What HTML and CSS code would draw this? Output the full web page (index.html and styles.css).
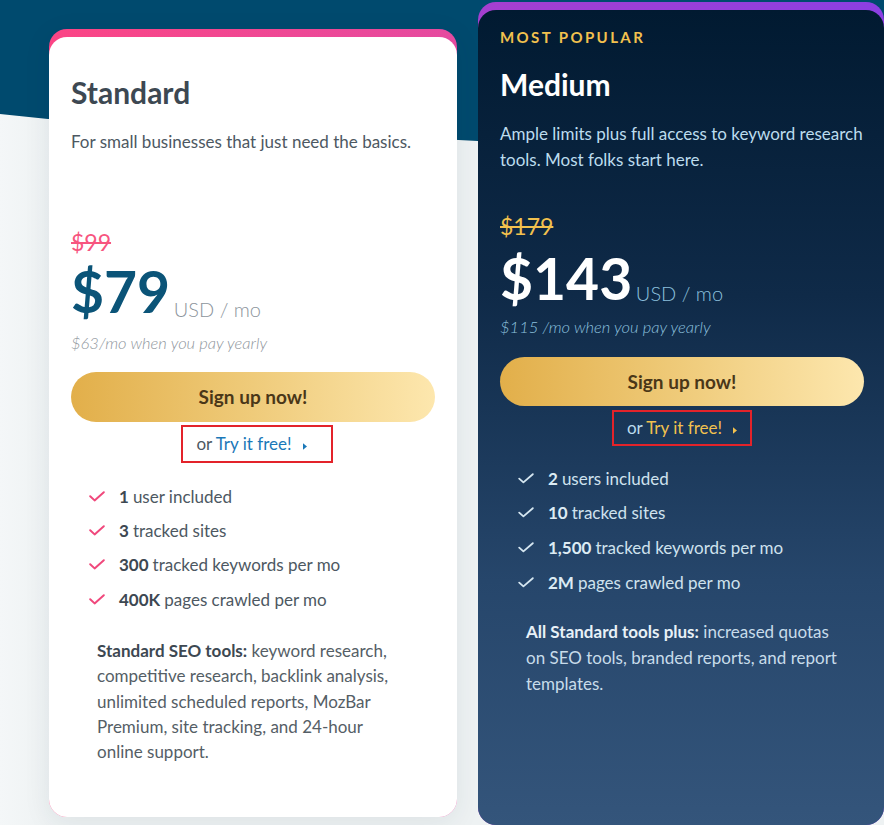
FILE: index.html
```html
<!DOCTYPE html>
<html lang="en">
<head>
<meta charset="utf-8">
<title>Pricing</title>
<link rel="stylesheet" href="styles.css">
</head>
<body>
<div class="stage">
  <div class="card card--standard">
    <div class="card__body">
      <h2 class="plan-name">Standard</h2>
      <p class="plan-desc">For small businesses that just need the basics.</p>
      <div class="old-price">$99</div>
      <div class="price"><span class="price__amount">$79</span> <span class="price__unit">USD / mo</span></div>
      <div class="yearly">$63/mo when you pay yearly</div>
      <a class="btn" href="#">Sign up now!</a>
      <div class="trial-row">
        <span class="trial">or <span class="trial__link">Try it free!</span><svg class="trial__arrow" viewBox="0 0 5 8" width="5" height="8"><path d="M0 0 L5 4 L0 8 Z"/></svg></span>
      </div>
      <ul class="features">
        <li><svg class="check" viewBox="0 0 16 11" width="16" height="11"><path d="M1.2 5.2 L5.6 9.4 L14.8 1.2"/></svg><b>1</b> user included</li>
        <li><svg class="check" viewBox="0 0 16 11" width="16" height="11"><path d="M1.2 5.2 L5.6 9.4 L14.8 1.2"/></svg><b>3</b> tracked sites</li>
        <li><svg class="check" viewBox="0 0 16 11" width="16" height="11"><path d="M1.2 5.2 L5.6 9.4 L14.8 1.2"/></svg><b>300</b> tracked keywords per mo</li>
        <li><svg class="check" viewBox="0 0 16 11" width="16" height="11"><path d="M1.2 5.2 L5.6 9.4 L14.8 1.2"/></svg><b>400K</b> pages crawled per mo</li>
      </ul>
      <p class="tools"><strong>Standard SEO tools:</strong> keyword research, competitive research, backlink analysis, unlimited scheduled reports, MozBar Premium, site tracking, and 24-hour online support.</p>
    </div>
  </div>

  <div class="card card--medium">
    <div class="card__body">
      <div class="badge">MOST POPULAR</div>
      <h2 class="plan-name">Medium</h2>
      <p class="plan-desc">Ample limits plus full access to keyword research tools. Most folks start here.</p>
      <div class="old-price">$179</div>
      <div class="price"><span class="price__amount">$143</span> <span class="price__unit">USD / mo</span></div>
      <div class="yearly">$115 /mo when you pay yearly</div>
      <a class="btn" href="#">Sign up now!</a>
      <div class="trial-row">
        <span class="trial">or <span class="trial__link">Try it free!</span><svg class="trial__arrow" viewBox="0 0 5 8" width="5" height="8"><path d="M0 0 L5 4 L0 8 Z"/></svg></span>
      </div>
      <ul class="features">
        <li><svg class="check" viewBox="0 0 16 11" width="16" height="11"><path d="M1.2 5.6 L5.4 9.4 L14.8 1.2"/></svg><b>2</b> users included</li>
        <li><svg class="check" viewBox="0 0 16 11" width="16" height="11"><path d="M1.2 5.6 L5.4 9.4 L14.8 1.2"/></svg><b>10</b> tracked sites</li>
        <li><svg class="check" viewBox="0 0 16 11" width="16" height="11"><path d="M1.2 5.6 L5.4 9.4 L14.8 1.2"/></svg><b>1,500</b> tracked keywords per mo</li>
        <li><svg class="check" viewBox="0 0 16 11" width="16" height="11"><path d="M1.2 5.6 L5.4 9.4 L14.8 1.2"/></svg><b>2M</b> pages crawled per mo</li>
      </ul>
      <p class="tools"><strong>All Standard tools plus:</strong> increased quotas on SEO tools, branded reports, and report templates.</p>
    </div>
  </div>
</div>
</body>
</html>
```

FILE: styles.css
```css
* {
  box-sizing: border-box;
}

html, body {
  margin: 0;
  padding: 0;
}

body {
  font-family: Lato, "Open Sans", "Liberation Sans", sans-serif;
  background: #eef2f3;
  overflow: hidden;
}

.stage {
  position: relative;
  display: flex;
  align-items: flex-start;
  gap: 21px;
  padding-left: 49px;
  width: 884px;
  height: 825px;
  overflow: hidden;
  background: linear-gradient(90deg, #f4f7f8 0%, #eef2f3 6%, #eef2f3 100%);
}

/* decorative blue band behind the cards */
.stage::before {
  content: "";
  position: absolute;
  left: 0;
  top: 0;
  width: 884px;
  height: 200px;
  background: #004a6e;
  clip-path: polygon(0 0, 884px 0, 884px 165px, 478px 141px, 48px 119px, 0 114px);
  z-index: 0;
}

.card {
  position: relative;
  z-index: 1;
  border-radius: 18px;
  padding-top: 8px;
  display: flex;
  flex-direction: column;
}

.card__body {
  flex: 1;
  border-radius: 18px;
}

.card--standard {
  margin-top: 29px;
  width: 408px;
  height: 788px;
  background: linear-gradient(90deg, #fb4585 0%, #e54aa0 100%);
  box-shadow: 0 6px 28px rgba(20, 50, 70, 0.08);
}

.card--standard .card__body {
  background: #ffffff;
  padding: 37px 22px 0 22px;
}

.card--medium {
  margin-top: 2px;
  width: 406px;
  height: 823px;
  background: linear-gradient(90deg, #a53fd0 0%, #8c3fe2 100%);
}

.card--medium .card__body {
  background: linear-gradient(180deg, #011a31 0%, #0f2a48 35%, #26466b 70%, #34557b 100%);
  padding: 17px 17px 0 22px;
}

/* badge */
.badge {
  font-size: 15px;
  line-height: 20px;
  font-weight: 700;
  letter-spacing: 2.4px;
  color: #f2c14e;
  margin-bottom: 19px;
}

/* titles */
.plan-name {
  margin: 0;
  font-size: 30px;
  line-height: 36px;
  font-weight: 700;
}

.card--standard .plan-name { color: #3d4852; }
.card--medium .plan-name { color: #ffffff; }

.plan-desc {
  margin: 19px 0 0 0;
  font-size: 17px;
  line-height: 26px;
  min-height: 52px;
}

.card--standard .plan-desc { color: #4d5862; }
.card--medium .plan-desc { color: #bcdcee; }

/* prices */
.old-price {
  font-size: 23px;
  line-height: 28px;
  text-decoration: line-through;
  text-decoration-thickness: 1.5px;
}

.card--standard .old-price { color: #f7557f; margin-top: 47px; }
.card--medium .old-price { color: #f2c14e; margin-top: 39px; }

.price {
  font-size: 57px;
  line-height: 57px;
  white-space: nowrap;
}

.price__amount {
  font-weight: 700;
}

.price__unit {
  font-size: 20px;
  line-height: 20px;
  font-weight: 300;
  margin-left: -11px;
}

.card--standard .price { margin-top: 7px; }
.card--standard .price__amount { color: #0b5478; }
.card--standard .price__unit { color: #8c949c; vertical-align: -4px; }

.card--medium .price { margin-top: 10px; }
.card--medium .price__amount { color: #ffffff; }
.card--medium .price__unit { color: #8cc0de; vertical-align: -1px; }

.yearly {
  font-size: 16.5px;
  line-height: 24px;
  font-style: italic;
  font-weight: 300;
}

.card--standard .yearly { color: #8f969d; margin-top: 11px; }
.card--medium .yearly { color: #8cc0de; margin-top: 8px; }

/* button */
.btn {
  display: block;
  height: 50px;
  border-radius: 25px;
  background: linear-gradient(90deg, #e2af4a 0%, #efcb7a 50%, #fde7ae 100%);
  color: #4a3718;
  font-size: 19px;
  line-height: 50px;
  font-weight: 700;
  text-align: center;
  text-decoration: none;
}

.card--standard .btn { margin-top: 17px; }
.card--medium .btn { margin: 18px 3px 0 0; height: 49px; line-height: 49px; }

/* try it free */
.trial-row {
  text-align: center;
}

.trial {
  display: inline-block;
  border: 2px solid #e3232a;
  font-size: 17px;
  line-height: 24px;
  white-space: nowrap;
}

.trial__arrow {
  display: inline-block;
  width: 4px;
  height: 7px;
  margin-left: 11px;
  vertical-align: 0px;
}

.card--standard .trial-row { margin-top: 3px; }
.card--standard .trial {
  padding: 5px 24px 5px 13px;
  margin-left: 8px;
  color: #4d5862;
}
.card--standard .trial__link { color: #1a78b8; }
.card--standard .trial__arrow { fill: #1a78b8; }

.card--medium .trial-row { margin: 4px 3px 0 0; }
.card--medium .trial {
  padding: 4px 13px;
  color: #bcdcee;
}
.card--medium .trial__link { color: #f2c14e; }
.card--medium .trial__arrow { fill: #f2c14e; }

/* features */
.features {
  list-style: none;
  margin: 0;
  padding: 0 0 0 18px;
  font-size: 17px;
}

.features li {
  display: flex;
  align-items: center;
  white-space: nowrap;
}

.features b {
  font-weight: 700;
  margin-right: 4px;
}

.check {
  flex: none;
  width: 16px;
  height: 11px;
  margin-right: 14px;
  fill: none;
  stroke-width: 2;
  stroke-linecap: round;
  stroke-linejoin: round;
}

.card--standard .features { margin-top: 16px; color: #4d5862; }
.card--standard .features li { height: 34.3px; }
.card--standard .features b { color: #3d4852; }
.card--standard .check { stroke: #f0487c; }

.card--medium .features { margin-top: 15px; padding-left: 18px; color: #cfe2ee; }
.card--medium .features li { height: 34.6px; }
.card--medium .features b { color: #dcebf4; }
.card--medium .check { stroke: #d5e6f0; stroke-width: 1.8; }

/* tools paragraph */
.tools {
  font-size: 17px;
  margin-bottom: 0;
}

.tools strong {
  font-weight: 700;
}

.card--standard .tools {
  margin: 22px 30px 0 26px;
  line-height: 25.3px;
  color: #555e66;
}
.card--standard .tools strong { color: #3d4852; }

.card--medium .tools {
  margin: 20px 22px 0 26px;
  line-height: 26px;
  color: #c8dcea;
}
.card--medium .tools strong { color: #e8f1f7; }
```
